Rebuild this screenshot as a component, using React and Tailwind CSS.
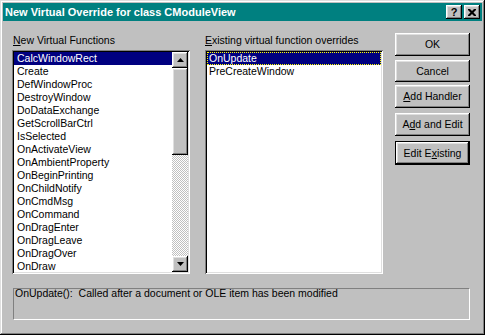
import React from "react";

const raised =
  "shadow-[inset_-1px_-1px_0_#000,inset_1px_1px_0_#fff,inset_-2px_-2px_0_#808080,inset_2px_2px_0_#dfdfdf]";

const leftItems = [
  "CalcWindowRect",
  "Create",
  "DefWindowProc",
  "DestroyWindow",
  "DoDataExchange",
  "GetScrollBarCtrl",
  "IsSelected",
  "OnActivateView",
  "OnAmbientProperty",
  "OnBeginPrinting",
  "OnChildNotify",
  "OnCmdMsg",
  "OnCommand",
  "OnDragEnter",
  "OnDragLeave",
  "OnDragOver",
  "OnDraw",
];

function Arrow({ down }) {
  return (
    <svg width="7" height="4" viewBox="0 0 7 4">
      {down ? (
        <polygon points="0,0 7,0 3.5,4" fill="#000" />
      ) : (
        <polygon points="0,4 7,4 3.5,0" fill="#000" />
      )}
    </svg>
  );
}

function Button({ children, def, className }) {
  if (def) {
    return (
      <div className={"w-[75px] h-[24px] border border-black " + className}>
        <div
          className={
            "w-full h-full flex items-center justify-center bg-[#c0c0c0] " +
            raised
          }
        >
          {children}
        </div>
      </div>
    );
  }
  return (
    <div
      className={
        "w-[75px] flex items-center justify-center bg-[#c0c0c0] " +
        raised +
        " " +
        className
      }
    >
      {children}
    </div>
  );
}

export default function App() {
  return (
    <div className="w-[485px] h-[335px] bg-[#c0c0c0] p-[3px] flex flex-col font-['Liberation_Sans',Arial,sans-serif] text-[10.5px] leading-[13px] text-black shadow-[inset_-1px_-1px_0_#000,inset_1px_1px_0_#dfdfdf,inset_-2px_-2px_0_#808080,inset_2px_2px_0_#fff]">
      {/* Title bar */}
      <div className="h-[18px] bg-[#008080] flex items-center pl-[2px] pr-[2px]">
        <div className="text-white font-bold text-[11px] flex-1">
          New Virtual Override for class CModuleView
        </div>
        <div className="flex gap-[2px]">
          <div
            className={
              "w-[16px] h-[14px] bg-[#c0c0c0] flex items-center justify-center font-bold text-[11px] leading-[11px] " +
              raised
            }
          >
            ?
          </div>
          <div
            className={
              "w-[16px] h-[14px] bg-[#c0c0c0] flex items-center justify-center " +
              raised
            }
          >
            <svg width="8" height="7" viewBox="0 0 8 7">
              <path
                d="M0 0h2l2 2 2-2h2v1l-2.5 2.5L8 6v1H6L4 5 2 7H0V6l2.5-2.5L0 1z"
                fill="#000"
              />
            </svg>
          </div>
        </div>
      </div>

      {/* Body */}
      <div className="flex pl-[9px] pt-[12px]">
        {/* Left column */}
        <div className="w-[178px] flex flex-col">
          <div className="h-[17px] pt-[1px] pl-[1px]">
            <span className="underline">N</span>ew Virtual Functions
          </div>
          <div className="h-[224px] bg-white p-[2px] flex shadow-[inset_1px_1px_0_#808080,inset_-1px_-1px_0_#fff,inset_2px_2px_0_#000,inset_-2px_-2px_0_#dfdfdf]">
            <div className="flex-1 overflow-hidden flex flex-col">
              {leftItems.map((it, i) => (
                <div
                  key={it}
                  className={
                    "h-[13px] shrink-0 pl-[3px] whitespace-nowrap " +
                    (i === 0 ? "bg-[#000080] text-white" : "")
                  }
                >
                  {it}
                </div>
              ))}
            </div>
            <div className="w-[16px] flex flex-col">
              <div
                className={
                  "h-[16px] bg-[#c0c0c0] flex items-center justify-center " +
                  raised
                }
              >
                <Arrow />
              </div>
              <div className={"h-[87px] bg-[#c0c0c0] " + raised}></div>
              <div className="flex-1 bg-[image:repeating-conic-gradient(#c0c0c0_0%_25%,#ffffff_0%_50%)] bg-[length:2px_2px]"></div>
              <div
                className={
                  "h-[16px] bg-[#c0c0c0] flex items-center justify-center " +
                  raised
                }
              >
                <Arrow down />
              </div>
            </div>
          </div>
        </div>

        {/* Middle column */}
        <div className="w-[178px] ml-[15px] flex flex-col">
          <div className="h-[17px] pt-[1px]">
            <span className="underline">E</span>xisting virtual function
            overrides
          </div>
          <div className="h-[224px] bg-white p-[2px] flex flex-col shadow-[inset_1px_1px_0_#808080,inset_-1px_-1px_0_#fff,inset_2px_2px_0_#000,inset_-2px_-2px_0_#dfdfdf]">
            <div className="h-[13px] bg-[#000080] text-white border border-dotted border-[#ffff00] pl-[1px] leading-[11px]">
              OnUpdate
            </div>
            <div className="h-[13px] pl-[2px]">PreCreateWindow</div>
          </div>
        </div>

        {/* Buttons */}
        <div className="ml-[12px] flex flex-col">
          <Button className="h-[23px]">OK</Button>
          <Button className="h-[22px] mt-[4px]">Cancel</Button>
          <Button className="h-[23px] mt-[3px]">
            <span>
              <span className="underline">A</span>dd Handler
            </span>
          </Button>
          <Button className="h-[23px] mt-[5px]">
            <span>
              A<span className="underline">d</span>d and Edit
            </span>
          </Button>
          <Button def className="mt-[5px]">
            <span>
              Edit E<span className="underline">x</span>isting
            </span>
          </Button>
        </div>
      </div>

      {/* Status */}
      <div className="ml-[10px] mt-[14px] w-[457px] h-[32px] border-t border-l border-t-[#808080] border-l-[#808080] border-b border-r border-b-white border-r-white pl-[1px]">
        <div className="-mt-[2px] leading-[13px]">
          OnUpdate():&nbsp; Called after a document or OLE item has been
          modified
        </div>
      </div>
    </div>
  );
}
